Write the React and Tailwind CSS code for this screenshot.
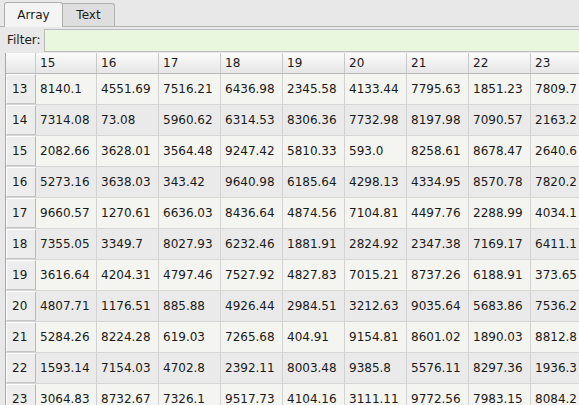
const cols = [15, 16, 17, 18, 19, 20, 21, 22, 23];

const rows = [
  [13, ['8140.1', '4551.69', '7516.21', '6436.98', '2345.58', '4133.44', '7795.63', '1851.23', '7809.7']],
  [14, ['7314.08', '73.08', '5960.62', '6314.53', '8306.36', '7732.98', '8197.98', '7090.57', '2163.2']],
  [15, ['2082.66', '3628.01', '3564.48', '9247.42', '5810.33', '593.0', '8258.61', '8678.47', '2640.6']],
  [16, ['5273.16', '3638.03', '343.42', '9640.98', '6185.64', '4298.13', '4334.95', '8570.78', '7820.2']],
  [17, ['9660.57', '1270.61', '6636.03', '8436.64', '4874.56', '7104.81', '4497.76', '2288.99', '4034.1']],
  [18, ['7355.05', '3349.7', '8027.93', '6232.46', '1881.91', '2824.92', '2347.38', '7169.17', '6411.1']],
  [19, ['3616.64', '4204.31', '4797.46', '7527.92', '4827.83', '7015.21', '8737.26', '6188.91', '373.65']],
  [20, ['4807.71', '1176.51', '885.88', '4926.44', '2984.51', '3212.63', '9035.64', '5683.86', '7536.2']],
  [21, ['5284.26', '8224.28', '619.03', '7265.68', '404.91', '9154.81', '8601.02', '1890.03', '8812.8']],
  [22, ['1593.14', '7154.03', '4702.8', '2392.11', '8003.48', '9385.8', '5576.11', '8297.36', '1936.3']],
  [23, ['3064.83', '8732.67', '7326.1', '9517.73', '4104.16', '3111.11', '9772.56', '7983.15', '8084.2']],
];

const colW = (i) => (i === 0 ? 'w-[61px]' : 'w-[62px]');

export default function App() {
  return (
    <div
      className="w-[579px] h-[405px] overflow-hidden bg-[#e8e8e8] text-[12px] text-[#1a1a1a]"
      style={{ fontFamily: '"DejaVu Sans", "Noto Sans", sans-serif' }}
    >
      {/* tabs */}
      <div className="h-[27px] flex items-end pl-[4px] border-b border-[#b4b4b4]">
        <div className="w-[59px] h-[25px] flex items-center justify-center bg-[#f4f4f4] border border-b-0 border-[#b0b0b0] rounded-t-[3px] -mb-px pb-px">
          Array
        </div>
        <div className="w-[52px] h-[23px] flex items-center justify-center bg-[#dedede] border border-b-0 border-l-0 border-[#b0b0b0] rounded-tr-[3px]">
          Text
        </div>
      </div>

      {/* filter */}
      <div className="h-[26px] flex items-center">
        <span className="pl-[7px] pr-[3px]">Filter:</span>
        <div className="flex-1 h-[23px] bg-[#e8f7de] border border-[#bcbcbc] border-r-0"></div>
      </div>

      {/* table */}
      <div className="ml-[5px] border-l border-[#a8a8a8]">
        <div className="flex h-[21px] bg-gradient-to-b from-[#fbfbfb] to-[#e6e6e6] border-b border-[#b8b8b8]">
          <div className="w-[30px] shrink-0 border-r border-[#c8c8c8]"></div>
          {cols.map((c, i) => (
            <div key={c} className={`${colW(i)} shrink-0 pl-[4px] leading-[20px] border-r border-[#c8c8c8]`}>
              {c}
            </div>
          ))}
        </div>
        {rows.map(([n, vals], r) => (
          <div
            key={n}
            className={`flex h-[31px] border-b border-[#d6d6d6] ${r % 2 === 0 ? 'bg-[#f4f4f0]' : 'bg-[#eaeaea]'}`}
          >
            <div className="w-[30px] shrink-0 flex items-center pl-[5px] bg-[#ededed] border-t border-l border-t-white border-l-white border-r border-b border-r-[#b8b8b8] border-b-[#c4c4c4]">
              {n}
            </div>
            {vals.map((v, i) => (
              <div key={i} className={`${colW(i)} shrink-0 flex items-center pl-[4px] border-r border-[#d2d2d2] whitespace-nowrap overflow-hidden`}>
                {v}
              </div>
            ))}
          </div>
        ))}
      </div>
    </div>
  );
}
